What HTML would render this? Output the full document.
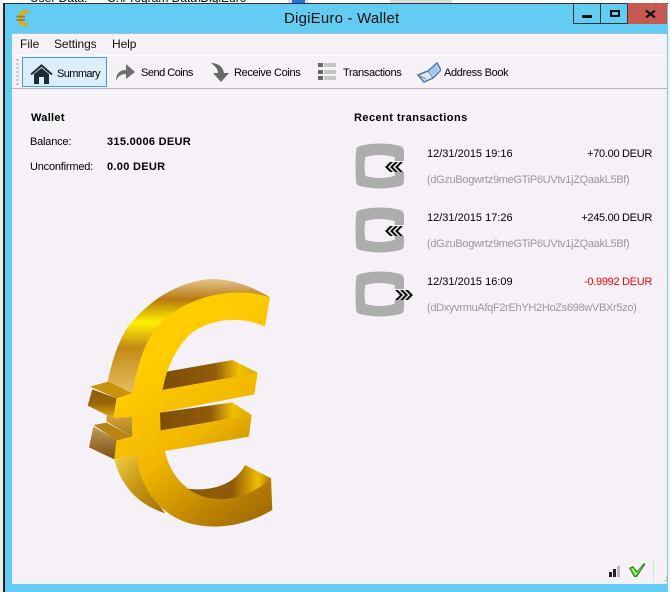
<!DOCTYPE html>
<html><head><meta charset="utf-8"><style>
html,body{margin:0;padding:0;background:#fff}
#r{position:relative;width:670px;height:592px;overflow:hidden;background:#f4f4f4;font-family:"Liberation Sans",sans-serif;font-size:11px;color:#000}
.a{position:absolute;white-space:nowrap;line-height:14px}
.b{font-weight:bold;letter-spacing:.3px}
.g{color:#999;letter-spacing:-.31px}
.m{font-size:12px;color:#111}
.t{letter-spacing:-.35px}
</style></head><body><div id="r">
<div class="a" style="left:0;top:0;width:670px;height:4px;background:#fff;overflow:hidden"></div>
<div class="a" style="left:30px;top:-9px;font-size:12px">User Data:</div>
<div class="a" style="left:107px;top:-9px;font-size:12px">C:\Program Data\DigiEuro</div>
<div class="a" style="left:288px;top:0;width:20px;height:3px;background:#ddd"></div>
<div class="a" style="left:292px;top:0;width:13px;height:3px;background:#2c6fd8"></div>
<div class="a" style="left:390px;top:0;width:62px;height:3px;background:#ddd"></div>
<div class="a" style="left:4px;top:3px;width:664px;height:589px;background:#62ccf2;border-left:1px solid #222;border-top:1px solid #333;box-sizing:border-box"></div>
<div class="a" style="left:0;top:0;width:3px;height:592px;background:#eee"></div>
<div class="a" style="left:3px;top:3px;width:2px;height:589px;background:#222"></div>
<div class="a" style="left:12px;top:33px;width:655px;height:551px;background:#f5f1f6"></div>
<div class="a" style="left:12px;top:33px;width:655px;height:1px;background:#9fc6d8"></div>
<div class="a" style="left:12px;top:55px;width:655px;height:1px;background:#fbfafc"></div>
<div class="a" style="left:12px;top:88px;width:655px;height:1px;background:#b9b9b9"></div>
<div class="a" style="left:284px;top:10px;font-size:15px;line-height:18px;color:#111;letter-spacing:.2px">DigiEuro - Wallet</div>
<svg class="a" style="left:15px;top:9px" width="15" height="18" viewBox="0 0 15 18"><path d="M13.500 3.500C9 2 5.500 3 5.500 8V11C5.500 15 9 16.500 13 15" fill="none" stroke="#e5a90f" stroke-width="3.500"/><path d="M1.500 7.500H10M1.500 11H10" stroke="#a9701c" stroke-width="1.800"/></svg>
<div class="a" style="left:573px;top:3px;width:28px;height:21px;border:1px solid #333;border-top:0;box-sizing:border-box"></div>
<div class="a" style="left:601px;top:3px;width:27px;height:21px;border-right:1px solid #333;border-bottom:1px solid #333;box-sizing:border-box"></div>
<div class="a" style="left:628px;top:3px;width:39px;height:21px;background:#c75a50"></div>
<div class="a" style="left:582px;top:15px;width:10px;height:3px;background:#111"></div>
<div class="a" style="left:610px;top:10px;width:6px;height:3px;border:2px solid #111"></div>
<svg class="a" style="left:645px;top:10px" width="11" height="8"><path d="M1 .5L10 7.500M10 .5L1 7.500" stroke="#111" stroke-width="2.200"/></svg>
<div class="a m" style="left:20px;top:37px">File</div>
<div class="a m" style="left:54px;top:37px;letter-spacing:-.1px">Settings</div>
<div class="a m" style="left:112px;top:37px;letter-spacing:-.1px">Help</div>
<svg class="a" style="left:16px;top:58px" width="3" height="28"><path d="M1.500 1V28" stroke="#bbb" stroke-width="2" stroke-dasharray="2 2"/></svg>
<div class="a" style="left:22px;top:57px;width:85px;height:30px;background:#dcedfb;border:1px solid #38a2d8;box-sizing:border-box"></div>
<svg class="a" style="left:30px;top:64px" width="23" height="20"><path d="M1 10.500L11.500 1.500L22 10.500" fill="none" stroke="#1d2c33" stroke-width="2"/><path d="M4 10L11.500 4L19 10V20H14V13H9V20H4Z" fill="#1d2c33"/></svg>
<div class="a t" style="left:57px;top:67px;letter-spacing:-.6px">Summary</div>
<svg class="a" style="left:115px;top:63px" width="21" height="19"><path d="M1 18C1 11 4 7 11 7V1L20 9L11 16V11C6 11 3 13 1 18Z" fill="#6e6e6e"/></svg>
<div class="a t" style="left:141px;top:66px;letter-spacing:-.5px">Send Coins</div>
<svg class="a" style="left:210px;top:62px" width="20" height="21"><path d="M1 1C7 1 13 4 14 11H19L11 20L3 11H8C8 7 5 4 1 1Z" fill="#686868"/></svg>
<div class="a t" style="left:234px;top:66px">Receive Coins</div>
<svg class="a" style="left:318px;top:63px" width="18" height="18"><path d="M0 0H5V4H0ZM0 7H5V11H0ZM0 13H5V17H0Z" fill="#666"/><path d="M6 1H18M6 3H18M6 8H18M6 10H18M6 14H18M6 16H18" stroke="#999"/></svg>
<div class="a t" style="left:343px;top:66px">Transactions</div>
<svg class="a" style="left:417px;top:61px" width="24" height="22"><path d="M1 14L11 10L20 2L24 9L16 17L7 21Z" fill="#dfe8f6" stroke="#4a74ad" stroke-width="1.500"/><path d="M11 10L16 17" stroke="#5f84bb"/><path d="M12 10L19.500 4L22 9L16 15Z" fill="#a8c6ee"/><path d="M3 15L9 18" stroke="#6a9a80"/></svg>
<div class="a t" style="left:444px;top:66px">Address Book</div>
<div class="a b" style="left:31px;top:111px">Wallet</div>
<div class="a t" style="left:30px;top:135px;letter-spacing:-.2px">Balance:</div>
<div class="a b" style="left:107px;top:135px">315.0006 DEUR</div>
<div class="a" style="left:30px;top:160px;letter-spacing:-.2px">Unconfirmed:</div>
<div class="a b" style="left:107px;top:160px">0.00 DEUR</div>
<div class="a b" style="left:354px;top:111px;letter-spacing:.45px">Recent transactions</div>
<svg class="a" style="left:0;top:0" width="670" height="592">
<defs>
<path id="t" d="M360 146Q380 141 400 146Q404 147 404 152V161H395L394.500 157Q380 153 365.500 157Q363.500 166 365.500 176Q380 180 394.500 176L395 172H404V181Q404 185 400 186Q380 191 360 186Q356 185 356 181Q355 166 356 151Q356 147 360 146Z"/>
<path id="l" d="M5 0L0 5L5 10H8L3 5L8 0Z"/>
</defs>
<g fill="#adadad"><use href="#t"/><use href="#t" y="64"/><use href="#t" y="128"/></g>
<g fill="#111">
<g transform="translate(385,162)"><use href="#l"/><use href="#l" x="5"/><use href="#l" x="10"/></g>
<g transform="translate(385,226)"><use href="#l"/><use href="#l" x="5"/><use href="#l" x="10"/></g>
<g transform="translate(413,290) scale(-1,1)"><use href="#l"/><use href="#l" x="5"/><use href="#l" x="10"/></g>
</g>
<defs>
<linearGradient id="f" gradientUnits="userSpaceOnUse" x1="250" y1="300" x2="600" y2="780"><stop offset="0" stop-color="#ffcc00"/><stop offset=".4" stop-color="#f2b800"/><stop offset=".75" stop-color="#bd8400"/><stop offset="1" stop-color="#9b6505"/></linearGradient>
<linearGradient id="s" gradientUnits="userSpaceOnUse" x1="0" y1="42" x2="0" y2="385"><stop offset="0" stop-color="#e2c690"/><stop offset=".18" stop-color="#b9790f"/><stop offset=".38" stop-color="#fff000"/><stop offset=".6" stop-color="#c28a16"/><stop offset="1" stop-color="#e6bd62"/></linearGradient>
<linearGradient id="h" x1="0" y1="0" x2="1" y2="0"><stop offset="0" stop-color="#7c4e06"/><stop offset=".55" stop-color="#8f5c08"/><stop offset=".8" stop-color="#f3c000"/><stop offset="1" stop-color="#d8a406"/></linearGradient>
<linearGradient id="b" x1="0" y1="0" x2="1" y2="0"><stop offset="0" stop-color="#8a5a08"/><stop offset=".55" stop-color="#8f5a08"/><stop offset=".85" stop-color="#f0be00"/><stop offset="1" stop-color="#b07a05"/></linearGradient>
<linearGradient id="k" x1="0" y1="0" x2="0" y2="1"><stop offset="0" stop-color="#c09a58"/><stop offset="1" stop-color="#7c4f10"/></linearGradient>
<linearGradient id="u" x1="0" y1="0" x2="0" y2="1"><stop offset="0" stop-color="#8a5a06"/><stop offset=".5" stop-color="#9a6806"/><stop offset="1" stop-color="#e2ae08"/></linearGradient>
<linearGradient id="v" x1="0" y1="0" x2="0" y2="1"><stop offset="0" stop-color="#d4a53e"/><stop offset="1" stop-color="#a97a18"/></linearGradient>
<linearGradient id="n" x1="0" y1="0" x2="1" y2="1"><stop offset="0" stop-color="#f0cc40"/><stop offset=".5" stop-color="#c49512"/><stop offset="1" stop-color="#a06e08"/></linearGradient>
</defs>
<g transform="translate(70,265) scale(.3333)">
<path d="M600 97C540 60 480 42 420 42C330 50 240 100 170 190C135 250 125 300 113 350L187 385L300 240L480 110Z" fill="url(#s)"/>
<path d="M277 375L290 320L487 285L563 323L400 370Z" fill="url(#h)"/>
<path d="M270 443V497L545 450L487 412Z" fill="url(#h)"/>
<path d="M60 365L115 350L187 385L140 400Z" fill="#c8920a"/>
<path d="M67 373L53 422L130 460L140 400Z" fill="url(#u)"/>
<path d="M110 450H187V515L110 470Z" fill="url(#v)"/>
<path d="M70 480L110 473L187 515L140 527Z" fill="#b88610"/>
<path d="M70 485L57 547L133 583L140 525Z" fill="url(#k)"/>
<path d="M133 583L200 573L240 680L285 745C210 720 155 670 133 583Z" fill="url(#n)"/>
<path d="M345 670C400 680 490 670 525 600L603 640L560 710L420 710Z" fill="url(#b)"/>
<path d="M600 97L585 185C520 155 440 155 370 200C320 240 290 310 277 375L563 323L553 388L270 443L272 497L545 450L537 515L285 558C295 610 330 670 400 695C470 715 550 690 603 640L607 735C530 780 450 795 370 778C290 760 212 690 200 573L133 583L140 527L187 515V455L130 460L140 400L187 385C205 290 225 220 280 165C370 85 510 65 600 97Z" fill="url(#f)"/>
</g>
<path d="M609 572H612V577H609ZM613 569H616V577H613Z" fill="#222"/>
<path d="M617 566H620V577H617Z" fill="#bbb"/>
<path d="M629 568L633 566L637 571L644 563L645.500 564L637 577H634Z" fill="#2f8f22"/>
<path d="M631 568.500L633 568L636.500 573L643 565.500L636 575.500H635Z" fill="#a8f070"/>
<path d="M653.500 558V582" stroke="#ddd"/>
<path d="M666 577H667V578H666ZM664 580H665V581H664ZM666 580H667V581H666Z" fill="#aaa"/>
</svg>
<div class="a" style="left:427px;top:147px">12/31/2015 19:16</div>
<div class="a" style="right:18px;top:147px;letter-spacing:-.3px">+70.00 DEUR</div>
<div class="a g" style="left:427px;top:173px">(dGzuBogwrtz9meGTiP6UVtv1jZQaakL5Bf)</div>
<div class="a" style="left:427px;top:211px">12/31/2015 17:26</div>
<div class="a" style="right:18px;top:211px;letter-spacing:-.3px">+245.00 DEUR</div>
<div class="a g" style="left:427px;top:237px">(dGzuBogwrtz9meGTiP6UVtv1jZQaakL5Bf)</div>
<div class="a" style="left:427px;top:275px">12/31/2015 16:09</div>
<div class="a" style="right:18px;top:275px;color:#f00;letter-spacing:-.3px">-0.9992 DEUR</div>
<div class="a g" style="left:427px;top:301px">(dDxyvrmuAfqF2rEhYH2HoZs698wVBXr5zo)</div>
</div></body></html>
